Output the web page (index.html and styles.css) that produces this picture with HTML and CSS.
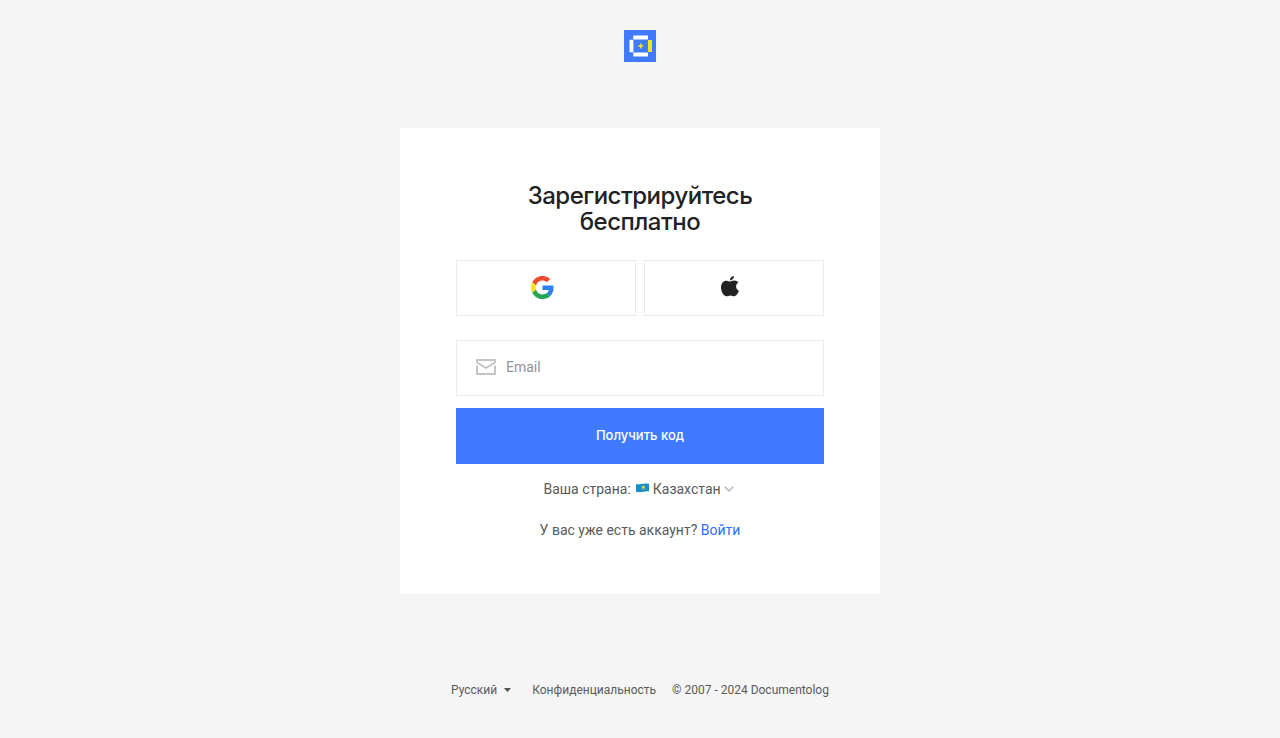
FILE: index.html
```html
<!DOCTYPE html>
<html lang="ru">
<head>
<meta charset="utf-8">
<title>Documentolog</title>
<link rel="stylesheet" href="styles.css">
</head>
<body>
<header class="header">
  <svg class="logo" viewBox="0 0 32 32">
    <path fill="#407bff" d="M0 0h32v32H0z"/>
    <path fill="#fff" d="M9.300 5.500h14.700v4H9.300zM5.500 9.800h3.900v12.500H5.500zM9.300 22.500h14.700v4H9.300z"/>
    <path fill="#f2e41e" d="M24 10h4v12h-4z"/>
    <path fill="#f2e41e" d="M16 13.500h1.400v1.800H19.200v1.500H17.400v1.800H16v-1.800h-1.800v-1.500H16z"/>
  </svg>
</header>
<main class="card">
  <h1 class="title">Зарегистрируйтесь бесплатно</h1>
  <div class="socials">
    <button class="social" aria-label="Google">
      <svg class="google" viewBox="0 0 48 48">
        <path fill="#ea4a2f" d="M24 9.5c3.54 0 6.71 1.22 9.21 3.6l6.85-6.85C35.9 2.38 30.47 0 24 0 14.62 0 6.51 5.38 2.56 13.22l7.98 6.19C12.43 13.72 17.74 9.5 24 9.5z"/>
        <path fill="#2f80f2" d="M46.98 24.55c0-1.57-.15-3.09-.38-4.55H24v9.02h12.94c-.58 2.96-2.26 5.48-4.78 7.18l7.73 6c4.51-4.18 7.09-10.36 7.09-17.65z"/>
        <path fill="#f5e11d" d="M10.53 28.59A14.5 14.5 0 0 1 9.77 24c0-1.6.27-3.14.76-4.59l-7.98-6.19A24 24 0 0 0 0 24c0 3.88.92 7.54 2.56 10.78l7.97-6.19z"/>
        <path fill="#22a652" d="M24 48c6.48 0 11.93-2.13 15.89-5.81l-7.73-6c-2.15 1.45-4.92 2.3-8.16 2.3-6.26 0-11.57-4.22-13.47-9.91l-7.98 6.19C6.51 42.62 14.62 48 24 48z"/>
      </svg>
    </button>
    <button class="social" aria-label="Apple">
      <svg class="apple" viewBox="0 0 18 21">
        <path d="M9.2 5.6C10.1 5.600 11.400 4.600 13.200 4.600 14.900 4.600 16.600 5.300 17.500 6.600 15.900 7.500 15.100 8.900 15.100 10.600 15.100 12.600 16.200 14.100 17.900 14.800 17.100 17.300 15.300 20.200 13.100 20.200 11.800 20.200 11.100 19.400 9.400 19.400 7.700 19.400 6.900 20.200 5.700 20.200 2.900 20.200 0 15.700 0 11.400 0 7.300 2.500 4.700 5.400 4.700 7 4.700 8.200 5.600 9.200 5.600zM8.900 4.400C8.800 2.200 10.600.2 12.900 0 13.100 2.300 11.200 4.400 8.900 4.400z"/>
      </svg>
    </button>
  </div>
  <label class="field">
    <svg class="mail" viewBox="0 0 20 16">
      <path d="M1 3.500V1h18v2.500L10 9 1 3.500M1 6.500V15h18V6.500"/>
    </svg>
    <input class="input" type="email" placeholder="Email">
  </label>
  <button class="submit">Получить код</button>
  <div class="country">
    <span>Ваша страна:</span>
    <svg class="flag" viewBox="0 0 13 10">
      <path fill="#168fca" d="M0 1.200C3 2 7-.4 13 .8V8.400C9 7.600 5 10 0 8.800z"/>
      <circle cx="7.300" cy="4.200" r="1.400" fill="#f2cf35"/>
      <path fill="none" stroke="#a9a968" stroke-width=".9" d="M5 5.500q2.300 2 4.500-.2"/>
    </svg>
    <span>Казахстан</span>
    <svg class="chevron" viewBox="0 0 10 6"><path d="M.8.8L5 5 9.200.8"/></svg>
  </div>
  <p class="login">У вас уже есть аккаунт? <a class="link" href="#">Войти</a></p>
</main>
<footer class="footer">
  <span class="lang">Русский<svg class="caret" viewBox="0 0 7 4"><path d="M0 0h7L3.500 4z"/></svg></span>
  <span class="privacy">Конфиденциальность</span>
  <span class="copy">© 2007 - 2024 Documentolog</span>
</footer>
</body>
</html>
```
FILE: styles.css
```css
* { box-sizing: border-box; }
body {
  margin: 0;
  height: 738px;
  display: flex;
  flex-direction: column;
  align-items: center;
  background: #f5f5f5;
  color: #5a5a5a;
  font: 14px/20px Roboto, sans-serif;
}
.header { height: 128px; padding-top: 30px; }
.logo { display: block; width: 32px; height: 32px; }
.card {
  width: 480px;
  height: 466px;
  padding: 55px 56px 56px;
  background: #fff;
}
.title {
  width: 300px;
  margin: 0 auto 25px;
  color: #222;
  font: 500 24px/26px Inter, sans-serif;
  letter-spacing: -0.5px;
  text-align: center;
}
.socials { display: flex; gap: 8px; margin-bottom: 24px; }
.social {
  flex: 1;
  height: 56px;
  display: flex;
  align-items: center;
  justify-content: center;
  padding: 0;
  border: 1px solid #e9e9e9;
  background: #fff;
}
.google { width: 23px; height: 23px; margin: 0 8px 1px 0; }
.apple { width: 18px; height: 21px; margin: 0 9px 4px 0; fill: #222; }
.field {
  height: 56px;
  display: flex;
  align-items: center;
  gap: 10px;
  padding: 0 19px 2px;
  border: 1px solid #e9e9e9;
}
.mail { width: 20px; height: 16px; fill: none; stroke: #c4c4c4; stroke-width: 2; stroke-linejoin: round; }
.input {
  width: 260px;
  padding: 0;
  border: 0;
  background: none;
  font: 14px/20px Roboto, sans-serif;
}
.input::placeholder { color: #949494; opacity: 1; }
.submit {
  display: block;
  width: 100%;
  height: 56px;
  margin-top: 12px;
  padding: 0 0 2px;
  border: 0;
  background: #407bff;
  color: #fff;
  font: 500 13px/20px Inter, sans-serif;
}
.country {
  height: 20px;
  display: flex;
  align-items: center;
  justify-content: center;
  margin-top: 15px;
}
.flag { width: 13px; height: 10px; margin: 0 4px 2px 5px; }
.chevron { width: 10px; height: 6px; margin: 0 3px 0 3px; fill: none; stroke: #c4c4c4; stroke-width: 1.9; }
.login { margin: 21px 0 0; text-align: center; }
.link { color: #2f6cff; text-decoration: none; }
.footer {
  display: flex;
  margin-top: 86px;
  font-size: 12px;
}
.lang { display: flex; align-items: center; margin-right: 21px; }
.caret { width: 7px; height: 4px; margin-left: 7px; fill: #515151; }
.privacy { margin-right: 16px; }
```
